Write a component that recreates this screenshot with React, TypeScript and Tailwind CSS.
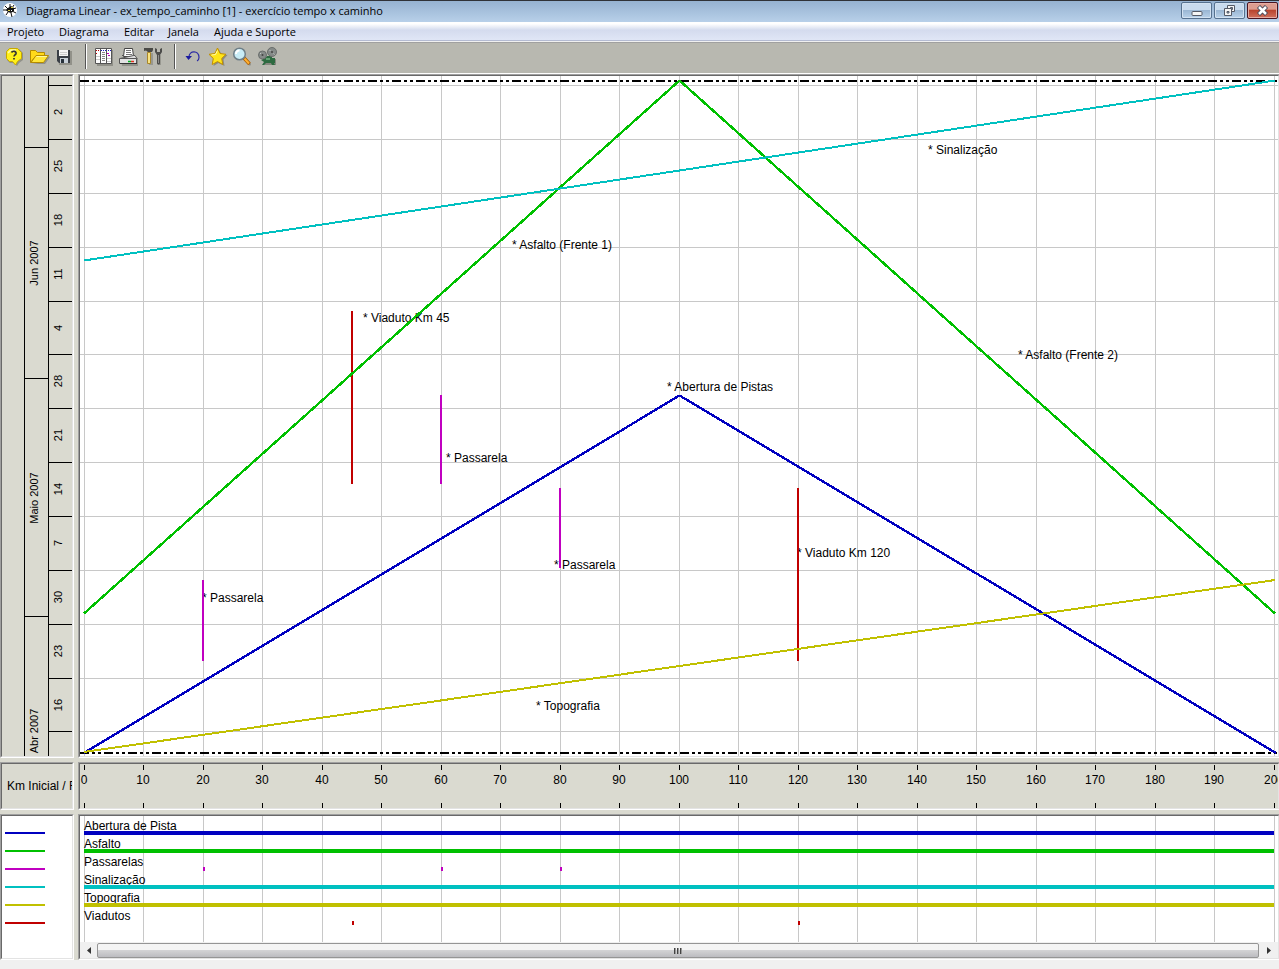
import React from 'react';

const COLORS = {
  blue: '#0000c0',
  green: '#00c000',
  magenta: '#c000c0',
  cyan: '#00c0c0',
  yellow: '#c0c000',
  red: '#c00000',
};

const MENU = [
  { label: 'Projeto', width: 'w-[52px]' },
  { label: 'Diagrama', width: 'w-[65px]' },
  { label: 'Editar', width: 'w-[44px]' },
  { label: 'Janela', width: 'w-[46px]' },
  { label: 'Ajuda e Suporte', width: 'w-[100px]' },
];

// The plot area is drawn on a base of 1198 units, turned into percentages so it follows the window
const BASE = 1198;
const px = (x: number) => `${(x / BASE) * 100}%`;
const kmX = (km: number) => Math.floor(4.4 + km * 5.95);

const KMS = Array.from({ length: 21 }, (_, i) => i * 10);
const WEEKS = [9, 63, 117, 171, 225, 278, 332, 386, 440, 494, 548, 602, 655];
const DAYS = ['2', '25', '18', '11', '4', '28', '21', '14', '7', '30', '23', '16'];
const MONTH_LINES = [71, 302, 540];
const MONTHS = [
  { label: 'Jun 2007', y: 187 },
  { label: 'Maio 2007', y: 422 },
  { label: 'Abr 2007', y: 655 },
];

interface Segment {
  color: string;
  width: number;
  from: [number, number];
  to: [number, number];
}

const SEGMENTS: Segment[] = [
  { color: COLORS.magenta, width: 2, from: [123, 504], to: [123, 585] },
  { color: COLORS.magenta, width: 2, from: [361, 319], to: [361, 408] },
  { color: COLORS.magenta, width: 2, from: [480, 412], to: [480, 492] },
  { color: COLORS.red, width: 2, from: [272, 235], to: [272, 408] },
  { color: COLORS.red, width: 2, from: [718, 412], to: [718, 585] },
  { color: COLORS.blue, width: 2.4, from: [4, 677], to: [599.5, 319.5] },
  { color: COLORS.blue, width: 2.4, from: [599.5, 319.5], to: [1196, 677] },
  { color: COLORS.green, width: 2.4, from: [4, 537.5], to: [599.5, 4.5] },
  { color: COLORS.green, width: 2.4, from: [599.5, 4.5], to: [1195, 537.5] },
  { color: COLORS.yellow, width: 2, from: [4, 676], to: [1195, 504] },
  { color: COLORS.cyan, width: 2, from: [4, 184.5], to: [1195, 4.5] },
];

const NOTES = [
  { text: '* Sinalização', x: 848, y: 78 },
  { text: '* Asfalto (Frente 1)', x: 432, y: 173 },
  { text: '* Viaduto Km 45', x: 283, y: 246 },
  { text: '* Asfalto (Frente 2)', x: 938, y: 283 },
  { text: '* Abertura de Pistas', x: 587, y: 315 },
  { text: '* Passarela', x: 366, y: 386 },
  { text: '* Passarela', x: 474, y: 493 },
  { text: '* Viaduto Km 120', x: 717, y: 481 },
  { text: '* Passarela', x: 122, y: 526 },
  { text: '* Topografia', x: 456, y: 634 },
];

const SERIES = [
  { name: 'Abertura de Pista', color: COLORS.blue, marks: [] as number[] },
  { name: 'Asfalto', color: COLORS.green, marks: [] as number[] },
  { name: 'Passarelas', color: COLORS.magenta, marks: [20, 60, 80] },
  { name: 'Sinalização', color: COLORS.cyan, marks: [] as number[] },
  { name: 'Topografia', color: COLORS.yellow, marks: [] as number[] },
  { name: 'Viadutos', color: COLORS.red, marks: [45, 120] },
];

function Sunken({ className = '', children }: { className?: string; children: React.ReactNode }) {
  return (
    <div className="min-w-0 border border-t-[#a0a0a0] border-l-[#a0a0a0] border-r-white border-b-white">
      <div
        className={`h-full overflow-hidden border border-t-[#696969] border-l-[#696969] border-r-[#e3e3e3] border-b-[#e3e3e3] ${className}`}
      >
        {children}
      </div>
    </div>
  );
}

function ToolButton({ label, children }: { label: string; children: React.ReactNode }) {
  return (
    <button type="button" aria-label={label} className="w-[25px] h-[22px] shrink-0">
      <svg width="25" height="22" viewBox="0 0 25 22" fill="none">
        {children}
      </svg>
    </button>
  );
}

function Separator() {
  return (
    <div className="flex w-[14px] shrink-0 justify-end pr-[4px]">
      <div className="h-[25px] w-[2px] border-l border-l-[#555] bg-white" />
    </div>
  );
}

function TitleBar() {
  return (
    <header className="flex h-[22px] items-start border-t border-[#303238] bg-linear-to-b from-[#96b2d1] to-[#b8d0e9]">
      <svg width="16" height="16" viewBox="0 0 16 16" className="ml-[2px] mt-[1px] shrink-0">
        <circle cx="8" cy="8" r="7" fill="#fff" />
        <path d="M3 4l3 3M8 2v3M12 3l-2 3M1 8h5M10 9l4 2M6 10l-2 3M9 11l1 4M11 7l3-1" stroke="#111" />
        <path d="M6 6l3-2 3 2v3l-3 2-3-1-2-2z" fill="#111" />
        <path d="M6 8h2v1H6zM9 5h2v1H9z" fill="#e0d040" />
        <path d="M9 8h1v1H9z" fill="#fff" />
      </svg>
      <h1 className="ml-2 min-w-0 flex-1 truncate text-[11px] leading-[20px] text-black">
        Diagrama Linear - ex_tempo_caminho [1] - exercício tempo x caminho
      </h1>
      <div className="mr-[1px] mt-[1px] flex shrink-0 gap-[2px]">
        <button
          type="button"
          aria-label="Minimizar"
          className="flex h-[17px] w-[31px] items-center justify-center rounded-[2px] border border-[#56718f] bg-linear-to-b from-[#c9dbee] from-45% via-[#9bb7d4] via-50% to-[#b9d2ea] shadow-[inset_0_0_0_1px_#d3e2f2]"
        >
          <svg width="12" height="13" viewBox="0 0 12 13">
            <rect x="1" y="7.5" width="10" height="4" rx="1" fill="#f5f5f5" stroke="#555a66" />
          </svg>
        </button>
        <button
          type="button"
          aria-label="Restaurar"
          className="flex h-[17px] w-[31px] items-center justify-center rounded-[2px] border border-[#56718f] bg-linear-to-b from-[#c9dbee] from-45% via-[#9bb7d4] via-50% to-[#b9d2ea] shadow-[inset_0_0_0_1px_#d3e2f2]"
        >
          <svg width="13" height="13" viewBox="0 0 13 13">
            <path d="M4.500 1.500h7v6h-7z" fill="#f5f5f5" stroke="#555a66" />
            <path d="M7.500 3.500h2v2h-2z" fill="#9bb7d4" stroke="#555a66" />
            <path d="M1.500 4.500h7v7h-7z" fill="#f5f5f5" stroke="#555a66" />
            <path d="M4 7.500h2v1.500h-2z" fill="#9bb7d4" stroke="#555a66" />
          </svg>
        </button>
        <button
          type="button"
          aria-label="Fechar"
          className="flex h-[17px] w-[31px] items-center justify-center rounded-[2px] border border-[#4a1420] bg-linear-to-b from-[#dd9d90] from-40% via-[#b9452f] via-50% to-[#d0705c] shadow-[inset_0_0_0_1px_#e6aca2]"
        >
          <svg width="13" height="11" viewBox="0 0 13 11">
            <path d="M2.500 1.500l8 8M10.500 1.500l-8 8" stroke="#4d4d5c" strokeWidth="4.500" />
            <path d="M3 2l7 7M10 2l-7 7" stroke="#fff" strokeWidth="2.500" />
          </svg>
        </button>
      </div>
    </header>
  );
}

function MenuBar() {
  return (
    <nav className="flex h-[19px] border-b border-[#b4bbd2] bg-linear-to-b from-white from-10% via-[#d4dbee] via-45% to-[#e0e6f6] pl-[7px]">
      {MENU.map((item) => (
        <button
          key={item.label}
          type="button"
          className={`${item.width} shrink-0 whitespace-nowrap text-left text-[11px] leading-[19px] text-black`}
        >
          {item.label}
        </button>
      ))}
    </nav>
  );
}

function ToolBar() {
  return (
    <div className="flex h-[33px] items-center border-t border-b border-t-[#f0f0f0] border-b-white bg-[#b8b8b0] pb-[2px] pl-[2px] shadow-[inset_0_1px_0_#a0a0a0]">
      <ToolButton label="Ajuda">
        <path d="M8 3h9l4 4v7l-4 3-2 3-3-3H8l-3-3V6z" fill="#77776f" opacity=".6" />
        <path d="M7.500 2.500h8l4 4v6l-4 3-2 3.500-3-3.500h-3l-3-3v-7z" fill="#fff01a" stroke="#c7a800" />
        <path d="M6 7l3-3h5" stroke="#fffbb0" strokeWidth="1.500" />
        <path d="M9.500 6.500c1-2 5-1.500 4.500 1-.3 1.300-2 1.500-2 3M12 12v1.500" stroke="#333" strokeWidth="1.700" />
      </ToolButton>
      <ToolButton label="Abrir">
        <path d="M5 18h13l5-7-2-1-4 6z" fill="#77776f" opacity=".6" />
        <path d="M3.500 16.500v-12h5l2 2h7v3l-10 2z" fill="#ffd91a" stroke="#b58b00" />
        <path d="M4 16.500l5-7h12.500l-5 7z" fill="#ffe638" stroke="#b58b00" />
        <path d="M9.500 10.500H20" stroke="#fff7a0" />
      </ToolButton>
      <ToolButton label="Salvar">
        <path d="M6 5h14v14H7z" fill="#77776f" opacity=".6" />
        <path d="M5 4h13v13H7l-2-2z" fill="#3a3f46" />
        <path d="M7 4h9v6H7z" fill="#f4f4f4" />
        <path d="M8 6.500h7M8 8.500h7" stroke="#ccc" />
        <path d="M8 12h8v5H8z" fill="#c8d0d8" />
        <path d="M9 13h3v4H9z" fill="#26303a" />
      </ToolButton>
      <Separator />
      <ToolButton label="Planilha">
        <path d="M6 4h16v16H6z" fill="#77776f" opacity=".6" />
        <path d="M4.500 2.500h16v15h-16z" fill="#fff" stroke="#555" />
        <path d="M9.500 3v14M15.500 3v14" stroke="#555" />
        <path d="M5 4.500h4M5 7.500h2" stroke="#c00000" strokeDasharray="1 1" />
        <path d="M10 4.500h5M17 4.500h3" stroke="#2020c0" strokeDasharray="1 1" />
        <path d="M16 7.500h2M17 9.500h2" stroke="#c000c0" />
        <path d="M11 6.500h3M11 8.500h3M11 10.500h3M11 12.500h3M11 14.500h3" stroke="#888" />
        <path d="M5 10.500h4M5 13.500h4M16 12.500h4M16 15.500h4" stroke="#ccc" />
      </ToolButton>
      <ToolButton label="Imprimir">
        <path d="M5 12h17v8H6z" fill="#77776f" opacity=".6" />
        <path d="M8.500 2.500h8l1 8h-10z" fill="#fff" stroke="#444" />
        <path d="M10 4.500h5M10 6.500h5M10 8.500h6" stroke="#777" />
        <path d="M6 9.500h2M17.500 9.500H19l2 3H4z" fill="#ddd" stroke="#555" />
        <path d="M3.500 12.500h17v5h-17z" fill="#e2e2e2" stroke="#555" />
        <path d="M4 17.500h17" stroke="#333" />
        <path d="M12 15.500h3" stroke="#00b020" strokeWidth="1.500" />
        <path d="M15 15.500h3" stroke="#e03020" strokeWidth="1.500" />
      </ToolButton>
      <ToolButton label="Ferramentas">
        <path d="M8 7h4v12H8zM17 9h3v10h-3z" fill="#77776f" opacity=".5" />
        <path d="M3 2h9v2l-1 2H7L5 4.500 3 5z" fill="#4a4a46" />
        <path d="M6.500 6.500h3v11h-3z" fill="#f2d45c" stroke="#a8862a" />
        <path d="M8 7v10" stroke="#fff3a8" />
        <path d="M14 2v4l2 3v8c0 2 3 2 3 0V9l2-3V2l-2 1v3h-3V3z" fill="#4c4c4a" />
        <path d="M17.500 9v8" stroke="#8b8b88" />
      </ToolButton>
      <Separator />
      <ToolButton label="Desfazer">
        <path d="M9 11c0-7 10-7 10 .5 0 2-1 3-2 3.500" stroke="#2a2aa4" strokeWidth="1.200" />
        <path d="M5.500 10h6.500l-3.500 4z" fill="#1a1aa0" />
      </ToolButton>
      <ToolButton label="Favoritos">
        <path d="M13.500 3l3 5 6 1-4 4.500 1 6.500-6-3-5 3 1-6-4-5 5.500-1z" fill="#77776f" opacity=".7" />
        <path
          d="M12.500 2l2.600 5.500 5.900.8-4.300 4.200 1.100 6-5.300-2.900-5.300 2.900 1.100-6L4 8.300l5.900-.8z"
          fill="#ffe61a"
          stroke="#c28f00"
        />
        <path d="M12.500 4.500l-2 4-4 .5" stroke="#fffbb0" />
      </ToolButton>
      <ToolButton label="Localizar">
        <path d="M15 14l5 6 1-2-5-6z" fill="#77776f" opacity=".7" />
        <path d="M14 12l5.500 6" stroke="#a85a00" strokeWidth="3.500" />
        <path d="M14.500 12.500l4.500 5" stroke="#ffb030" strokeWidth="2" />
        <circle cx="9.500" cy="8" r="5.800" fill="#c8ecf6" stroke="#6f7f88" strokeWidth="1.500" />
        <path d="M6 8c0-2 1.500-3.500 3.500-3.500" stroke="#fff" strokeWidth="2" />
      </ToolButton>
      <ToolButton label="Filmar">
        <path d="M9 13h12v6H9z" fill="#66665f" opacity=".6" />
        <path d="M6 14l4-2 2-2h5v2h3v5h-1l1 2h-3l-1-2h-5l-2 2H7l2-3z" fill="#2d6a40" />
        <path d="M11 12h4v2h-4z" fill="#63a273" />
        <circle cx="7.500" cy="9" r="4" fill="#868b89" stroke="#6a6e6c" />
        <circle cx="17" cy="6" r="4.500" fill="#868b89" stroke="#6a6e6c" />
        <circle cx="7.500" cy="9" r="1" fill="#444" />
        <circle cx="17" cy="6" r="1" fill="#444" />
        <path d="M5 7l1 1M14.500 4l1 1M18.500 7.500l1 1" stroke="#c5c8c6" />
      </ToolButton>
    </div>
  );
}

function TimeAxis() {
  return (
    <svg className="block h-[680px] w-[70px] bg-[#dadad0] text-[11px]" shapeRendering="crispEdges">
      <g stroke="#000">
        <line x1="22.5" y1="0" x2="22.5" y2="680" />
        <line x1="46.5" y1="0" x2="46.5" y2="680" />
        {WEEKS.map((y) => (
          <line key={y} x1="46" y1={y + 0.5} x2="70" y2={y + 0.5} />
        ))}
        {MONTH_LINES.map((y) => (
          <line key={y} x1="22" y1={y + 0.5} x2="46" y2={y + 0.5} />
        ))}
      </g>
      <g textAnchor="middle" fill="#000">
        {DAYS.map((day, i) => (
          <text key={day} transform={`translate(60 ${WEEKS[i] + 27}) rotate(-90)`}>
            {day}
          </text>
        ))}
        {MONTHS.map((month) => (
          <text key={month.label} transform={`translate(36 ${month.y}) rotate(-90)`}>
            {month.label}
          </text>
        ))}
      </g>
    </svg>
  );
}

function Chart() {
  return (
    <svg className="block h-[680px] w-full bg-white text-[12px]" shapeRendering="crispEdges">
      <g stroke="#c8c8c8">
        {KMS.map((km) => (
          <line key={km} x1={px(kmX(km) + 0.5)} y1="0" x2={px(kmX(km) + 0.5)} y2="680" />
        ))}
        {WEEKS.map((y) => (
          <line key={y} x1="0" y1={y + 0.5} x2="100%" y2={y + 0.5} />
        ))}
      </g>
      <g stroke="#000" strokeWidth="2" strokeDasharray="9 3 3 3 3 3">
        <line x1="0" y1="5" x2="100%" y2="5" />
        <line x1="0" y1="677" x2="100%" y2="677" />
      </g>
      {NOTES.map((note, i) => (
        <text key={i} x={px(note.x)} y={note.y} fill="#000">
          {note.text}
        </text>
      ))}
      {SEGMENTS.map((s, i) => (
        <line
          key={i}
          x1={px(s.from[0])}
          y1={s.from[1]}
          x2={px(s.to[0])}
          y2={s.to[1]}
          stroke={s.color}
          strokeWidth={s.width}
        />
      ))}
    </svg>
  );
}

function KmScale() {
  return (
    <svg className="block h-[44px] w-full bg-[#dadad0] text-[12px]" shapeRendering="crispEdges">
      {KMS.map((km) => (
        <g key={km}>
          <line x1={px(kmX(km) + 0.5)} y1="1" x2={px(kmX(km) + 0.5)} y2="6" stroke="#000" />
          <line x1={px(kmX(km) + 0.5)} y1="39" x2={px(kmX(km) + 0.5)} y2="44" stroke="#000" />
          <text x={px(kmX(km))} y="20" textAnchor="middle" fill="#000">
            {km}
          </text>
        </g>
      ))}
    </svg>
  );
}

function SeriesChart() {
  return (
    <svg className="block h-[126px] w-full bg-white text-[12px]" shapeRendering="crispEdges">
      {KMS.map((km) => (
        <line key={km} x1={px(kmX(km) + 0.5)} y1="0" x2={px(kmX(km) + 0.5)} y2="126" stroke="#c8c8c8" />
      ))}
      {SERIES.map((s, i) => (
        <g key={s.name}>
          <text x={px(4)} y={14 + i * 18} fill="#000">
            {s.name}
          </text>
          {s.marks.length === 0 ? (
            <rect x={px(4)} y={15 + i * 18} width={px(1190)} height="4" fill={s.color} />
          ) : (
            s.marks.map((km) => (
              <rect key={km} x={px(kmX(km))} y={15 + i * 18} width="2" height="4" fill={s.color} />
            ))
          )}
        </g>
      ))}
    </svg>
  );
}

function ScrollBar() {
  return (
    <div className="flex h-[16px] bg-[#f0f0f0]">
      <button type="button" aria-label="Rolar para a esquerda" className="flex w-[17px] items-center justify-center">
        <svg width="4" height="7" viewBox="0 0 4 7">
          <path d="M4 0v7L0 3.500z" fill="#333" />
        </svg>
      </button>
      <div className="mt-[1px] flex flex-1 items-center justify-center gap-[1px] rounded-[2px] border border-[#959595] bg-linear-to-b from-[#f4f4f4] from-45% via-[#d2d2d4] via-50% to-[#bcbcc0]">
        <span className="h-[6px] w-[2px] border-l border-[#444] bg-[#999]" />
        <span className="h-[6px] w-[2px] border-l border-[#444] bg-[#999]" />
        <span className="h-[6px] w-[2px] border-l border-[#444] bg-[#999]" />
      </div>
      <button type="button" aria-label="Rolar para a direita" className="flex w-[19px] items-center justify-center">
        <svg width="4" height="7" viewBox="0 0 4 7">
          <path d="M0 0v7l4-3.500z" fill="#333" />
        </svg>
      </button>
    </div>
  );
}

export default function App() {
  return (
    <div className="min-h-screen overflow-hidden bg-[#f0f0f0] font-['Open_Sans',sans-serif]">
      <TitleBar />
      <MenuBar />
      <ToolBar />
      <main className="grid grid-cols-[74px_minmax(0,1fr)] gap-[4px] bg-[#dadad0] font-['Liberation_Sans',Arial,sans-serif]">
        <Sunken>
          <TimeAxis />
        </Sunken>
        <div className="-mr-px flex flex-col">
          <Sunken>
            <Chart />
          </Sunken>
        </div>
        <Sunken className="bg-[#dadad0]">
          <div className="whitespace-nowrap pl-[5px] text-[12px] leading-[44px] text-black">Km Inicial / Final</div>
        </Sunken>
        <div className="-mr-px flex flex-col">
          <Sunken>
            <KmScale />
          </Sunken>
        </div>
        <Sunken className="bg-white">
          <ul className="flex flex-col gap-[16px] pl-[3px] pt-[16px]">
            {SERIES.map((s) => (
              <li key={s.name} aria-label={s.name} className="h-[2px] w-[40px]" style={{ backgroundColor: s.color }} />
            ))}
          </ul>
        </Sunken>
        <div className="-mr-px flex flex-col">
          <Sunken>
            <SeriesChart />
            <ScrollBar />
          </Sunken>
        </div>
      </main>
    </div>
  );
}
